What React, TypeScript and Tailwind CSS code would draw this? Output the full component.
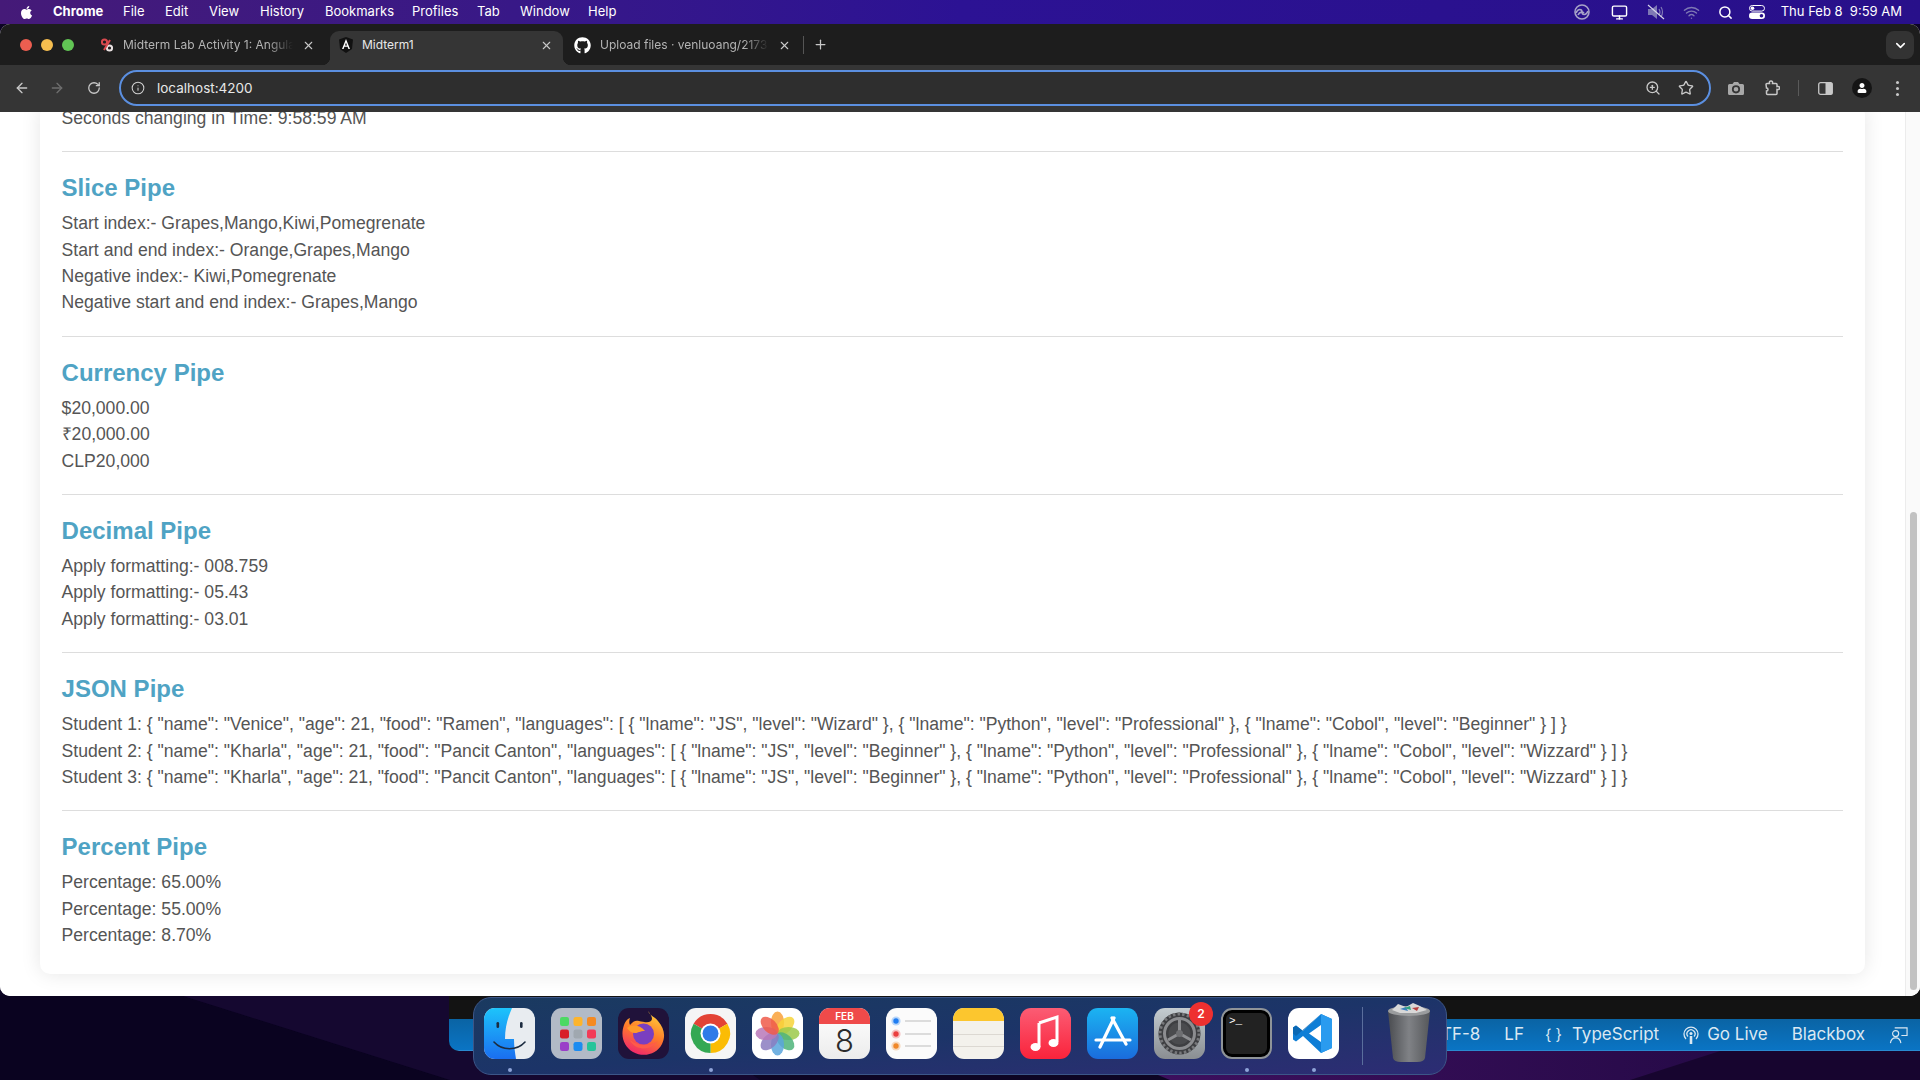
import React from "react";
import { ArrowLeft, ArrowRight, RotateCw, Info, ZoomIn, Star, ChevronDown, X, Plus, Search, Wifi, Monitor } from "lucide-react";
import { FaGithub, FaApple, FaUser } from "react-icons/fa";

const sections: { title: string; lines: string[] }[] = [
  { title: "Slice Pipe", lines: ["Start index:- Grapes,Mango,Kiwi,Pomegrenate", "Start and end index:- Orange,Grapes,Mango", "Negative index:- Kiwi,Pomegrenate", "Negative start and end index:- Grapes,Mango"] },
  { title: "Currency Pipe", lines: ["$20,000.00", "₹20,000.00", "CLP20,000"] },
  { title: "Decimal Pipe", lines: ["Apply formatting:- 008.759", "Apply formatting:- 05.43", "Apply formatting:- 03.01"] },
  { title: "JSON Pipe", lines: [
    'Student 1: { "name": "Venice", "age": 21, "food": "Ramen", "languages": [ { "lname": "JS", "level": "Wizard" }, { "lname": "Python", "level": "Professional" }, { "lname": "Cobol", "level": "Beginner" } ] }',
    'Student 2: { "name": "Kharla", "age": 21, "food": "Pancit Canton", "languages": [ { "lname": "JS", "level": "Beginner" }, { "lname": "Python", "level": "Professional" }, { "lname": "Cobol", "level": "Wizzard" } ] }',
    'Student 3: { "name": "Kharla", "age": 21, "food": "Pancit Canton", "languages": [ { "lname": "JS", "level": "Beginner" }, { "lname": "Python", "level": "Professional" }, { "lname": "Cobol", "level": "Wizzard" } ] }',
  ] },
  { title: "Percent Pipe", lines: ["Percentage: 65.00%", "Percentage: 55.00%", "Percentage: 8.70%"] },
];

function Tile({ children }: { children: React.ReactNode }) {
  return <svg viewBox="0 0 51 51" className="w-[51px] h-[51px] shrink-0">{children}</svg>;
}

const Finder = () => (
  <Tile>
    <defs><linearGradient id="fb" x1="0" y1="0" x2="0" y2="1"><stop offset="0" stopColor="#1dc4fb" /><stop offset="1" stopColor="#1a6ef0" /></linearGradient></defs>
    <rect width="51" height="51" rx="11" fill="#e8ecf0" />
    <path d="M11 0H28C24 9 21 19 21 31H30C30 38 31 45 32 51H11A11 11 0 0 1 0 40V11A11 11 0 0 1 11 0Z" fill="url(#fb)" />
    <rect x="12.5" y="14" width="2.6" height="6" rx="1.3" fill="#1c2c40" />
    <rect x="36" y="14" width="2.6" height="6" rx="1.3" fill="#1c2c40" />
    <path d="M10 34C18 43 33 43 41 34" fill="none" stroke="#1c2c40" strokeWidth="1.6" strokeLinecap="round" />
  </Tile>
);
const Launchpad = () => {
  const c = ["#4cd964", "#fdb42c", "#f58a22", "#d81e28", "#a0a8b0", "#f23b58", "#9a3fc8", "#1c8cf0", "#25c49a"];
  return (
    <Tile>
      <rect width="51" height="51" rx="11" fill="#b2bac6" />
      {c.map((f, i) => <rect key={i} x={9 + (i % 3) * 13.5} y={9 + Math.floor(i / 3) * 12.5} width="9" height="9" rx="2.2" fill={f} />)}
    </Tile>
  );
};
const Firefox = () => (
  <Tile>
    <defs>
      <linearGradient id="ff" x1="0.7" y1="0" x2="0.3" y2="1"><stop offset="0" stopColor="#ffcf3a" /><stop offset="0.5" stopColor="#ff7b2a" /><stop offset="1" stopColor="#f0256e" /></linearGradient>
    </defs>
    <rect width="51" height="51" rx="11" fill="#20123a" />
    <path d="M30 3C32 8 36 8 40 13C46 20 48 28 44 36C39 46 26 50 15 44C6 39 2 28 6 17C7 14 9 11 12 10C11 13 11 15 12 17C15 13 18 12 21 13C26 14 33 16 34 11C34 8 32 6 30 3Z" fill="url(#ff)" />
    <circle cx="25.5" cy="26" r="10.5" fill="#7a3fc0" />
    <path d="M9 20C14 16 22 17 27 23C22 23 20 25 17 25C14 25 11 23 9 20Z" fill="#ff9a2a" />
    <path d="M12 32C16 42 32 44 40 33C34 38 20 39 12 32Z" fill="#ff5a4a" />
  </Tile>
);
const Chrome = () => (
  <Tile>
    <rect width="51" height="51" rx="11" fill="#f5f5f5" />
    <path d="M25.5 25.5L8.6 15.75A19.5 19.5 0 0 1 42.4 15.75Z" fill="#e34335" />
    <path d="M25.5 25.5L42.4 15.75A19.5 19.5 0 0 1 25.5 45Z" fill="#fbbc05" />
    <path d="M25.5 25.5L25.5 45A19.5 19.5 0 0 1 8.6 15.75Z" fill="#34a853" />
    <circle cx="25.5" cy="25.5" r="10" fill="#fff" />
    <circle cx="25.5" cy="25.5" r="8" fill="#2f7be8" />
  </Tile>
);
const Photos = () => {
  const p = ["#f9a13a", "#f7d43a", "#9cc94a", "#4fb47a", "#5aa5dc", "#8a7cc0", "#b878b8", "#ee5a4a"];
  return (
    <Tile>
      <rect width="51" height="51" rx="11" fill="#fff" />
      {p.map((f, i) => <ellipse key={i} cx="25.5" cy="14.5" rx="6.6" ry="11" fill={f} opacity="0.85" transform={`rotate(${i * 45} 25.5 25.5)`} />)}
    </Tile>
  );
};
const Calendar = () => (
  <div className="relative w-[51px] h-[51px] shrink-0 rounded-[11px] bg-gradient-to-b from-white to-[#ececec] flex flex-col items-center">
    <div className="w-full h-[16px] rounded-t-[11px] bg-[#ef4a4a] text-white text-[10px] font-semibold leading-[17px] text-center font-['Inter',sans-serif]">FEB</div>
    <div className="text-[#2b2b2b] text-[31px] leading-[33px] font-['Inter',sans-serif] font-light">8</div>
  </div>
);
const Reminders = () => (
  <Tile>
    <rect width="51" height="51" rx="11" fill="#fbfbfb" />
    {[["#1f7df2", 13], ["#ea3f3f", 26], ["#f0882a", 38]].map(([f, y], i) => (
      <g key={i}>
        <circle cx="10" cy={y as number} r="4.6" fill={f as string} opacity="0.3" />
        <circle cx="10" cy={y as number} r="2.7" fill={f as string} />
        <rect x="19" y={(y as number) - 0.7} width="26" height="1.4" fill="#cfcfcf" />
      </g>
    ))}
  </Tile>
);
const Notes = () => (
  <Tile>
    <rect width="51" height="51" rx="11" fill="#f3f1ec" />
    <path d="M0 13V11A11 11 0 0 1 11 0H40A11 11 0 0 1 51 11V13Z" fill="#fcc62e" />
    <rect y="26" width="51" height="0.8" fill="#d6d3cc" />
    <rect y="38" width="51" height="0.8" fill="#d6d3cc" />
  </Tile>
);
const Music = () => (
  <Tile>
    <defs><linearGradient id="mg" x1="0" y1="0" x2="0" y2="1"><stop offset="0" stopColor="#fb5c74" /><stop offset="1" stopColor="#fa233b" /></linearGradient></defs>
    <rect width="51" height="51" rx="11" fill="url(#mg)" />
    <path d="M19 15L37 9V34" fill="none" stroke="#fff" strokeWidth="3" />
    <path d="M19 15V39" fill="none" stroke="#fff" strokeWidth="3" />
    <ellipse cx="15.5" cy="39" rx="5" ry="4" fill="#fff" />
    <ellipse cx="33.5" cy="35" rx="5" ry="4" fill="#fff" />
  </Tile>
);
const AppStore = () => (
  <Tile>
    <defs><linearGradient id="ag" x1="0" y1="0" x2="0" y2="1"><stop offset="0" stopColor="#1bb4f2" /><stop offset="1" stopColor="#1a6cdc" /></linearGradient></defs>
    <rect width="51" height="51" rx="11" fill="url(#ag)" />
    <g stroke="#fff" strokeWidth="3.2" strokeLinecap="round" fill="none">
      <path d="M27 10L13 39" />
      <path d="M25 10L39 36" />
      <path d="M9 32H43" />
    </g>
  </Tile>
);
const Settings = () => (
  <div className="relative w-[51px] h-[51px] shrink-0">
    <Tile>
      <defs><linearGradient id="sg" x1="0" y1="0" x2="0" y2="1"><stop offset="0" stopColor="#c4ccd0" /><stop offset="1" stopColor="#8a8e92" /></linearGradient></defs>
      <rect width="51" height="51" rx="11" fill="url(#sg)" />
      <circle cx="25.5" cy="25.5" r="21" fill="#3e3f42" />
      <circle cx="25.5" cy="25.5" r="19.5" fill="none" stroke="#77787b" strokeWidth="3" strokeDasharray="2.5 2.2" />
      <circle cx="25.5" cy="25.5" r="15" fill="none" stroke="#8c8d90" strokeWidth="3" />
      <circle cx="25.5" cy="25.5" r="11" fill="#4a4b4e" />
      <g stroke="#8e8f92" strokeWidth="3">
        <path d="M25.5 25.5V12" />
        <path d="M25.5 25.5L37 32" />
        <path d="M25.5 25.5L14 32" />
      </g>
      <circle cx="25.5" cy="25.5" r="3.5" fill="#6e6f72" />
    </Tile>
    <div className="absolute -top-[6px] -right-[8px] w-6 h-6 rounded-full bg-[#ee3030] text-white text-[12px] font-semibold flex items-center justify-center font-['Inter',sans-serif]">2</div>
  </div>
);
const Terminal = () => (
  <div className="w-[51px] h-[51px] shrink-0 rounded-[11px] bg-black border-2 border-[#8f9498] p-[3px]">
    <div className="w-full h-full rounded-[6px] bg-[#222] text-white text-[11px] leading-[12px] pl-[3px] pt-[2px] font-['Liberation_Mono',monospace]">&gt;_</div>
  </div>
);
const VSCode = () => (
  <Tile>
    <rect width="51" height="51" rx="11" fill="#fff" />
    <path d="M33 6L44 11V40L33 45L15 28L8 33.5L5 31.5V19.5L8 17.5L15 23ZM33 17L21 25.5L33 34Z" fill="#0e7ed6" fillRule="evenodd" />
    <path d="M33 6L8 28L5 25.5V19.5L8 17.5L15 23L33 6Z" fill="#0a68b4" />
    <path d="M33 6L44 11V40L33 45Z" fill="#2a9bef" fillRule="evenodd" />
  </Tile>
);
const Trash = () => (
  <svg viewBox="0 0 46 60" className="w-[46px] h-[60px] shrink-0">
    <defs><linearGradient id="tg" x1="0" y1="0" x2="1" y2="0"><stop offset="0" stopColor="#4a4c50" /><stop offset="0.5" stopColor="#808286" /><stop offset="1" stopColor="#55575a" /></linearGradient></defs>
    <path d="M2 8L7 55Q8 59 15 59H31Q38 59 39 55L44 8Z" fill="url(#tg)" />
    <ellipse cx="23" cy="8" rx="21" ry="5" fill="#9a9c9e" />
    <path d="M6 7L12 1L20 4L27 0L34 3L41 7L30 10H14Z" fill="#d8d8d8" />
    <path d="M14 6L20 4L22 8Z" fill="#3a7fc0" />
    <path d="M26 5L33 4L31 8Z" fill="#b84040" />
    <path d="M18 5L24 3L25 7Z" fill="#30a080" />
  </svg>
);

const Dot = () => <span className="absolute left-1/2 -translate-x-1/2 top-[60px] w-[4px] h-[4px] rounded-full bg-[#8fa4d8]" />;

function Favicon1() {
  return (
    <svg viewBox="0 0 14 14" className="w-[14px] h-[14px] shrink-0">
      <circle cx="4.5" cy="4" r="2.6" fill="none" stroke="#d8494e" strokeWidth="2" />
      <circle cx="9.5" cy="10" r="2.6" fill="none" stroke="#e8e0e0" strokeWidth="2" />
      <path d="M10 2L4 12" stroke="#d8494e" strokeWidth="2" />
    </svg>
  );
}
function AngularIcon() {
  return (
    <svg viewBox="0 0 14 16" className="w-[14px] h-[16px] shrink-0">
      <path d="M7 0L14 2.5L13 12L7 16L1 12L0 2.5Z" fill="#111" />
      <path d="M7 2L3 12H4.6L5.4 9.8H8.6L9.4 12H11ZM6 8.4L7 5.5L8 8.4Z" fill="#fff" fillRule="evenodd" />
    </svg>
  );
}

const Tab = ({ icon, title, active, w, fade }: { icon: React.ReactNode; title: string; active?: boolean; w: string; fade?: boolean }) => (
  <div className={`relative ${w} h-[34px] flex items-center pl-[9px] pr-[10px] pb-[6px] gap-[9px] rounded-t-[9px] ${active ? "bg-[#353535] text-[#e8e8e8]" : "text-[#b4b4b4]"}`}>
    {active && <span className="absolute -left-[8px] bottom-0 w-[8px] h-[8px] bg-[radial-gradient(circle_at_0_0,transparent_8px,#353535_8.5px)]" />}
    {active && <span className="absolute -right-[8px] bottom-0 w-[8px] h-[8px] bg-[radial-gradient(circle_at_100%_0,transparent_8px,#353535_8.5px)]" />}
    {icon}
    <span className={`flex-1 whitespace-nowrap overflow-hidden text-[12px] ${fade ? "[mask-image:linear-gradient(90deg,#000_85%,transparent)]" : ""}`}>{title}</span>
    <X size={13} strokeWidth={2} className="shrink-0 text-[#c8c8c8]" />
  </div>
);

export default function App() {
  return (
    <div className="relative w-[1920px] h-[1080px] overflow-hidden bg-[#0d0524] font-['Inter',sans-serif]">
      <svg viewBox="0 0 1920 1080" className="absolute inset-0 w-full h-full">
        <defs>
          <linearGradient id="wp" x1="0" y1="0" x2="1" y2="0"><stop offset="0" stopColor="#3f1060" /><stop offset="1" stopColor="#260a48" /></linearGradient>
        </defs>
        <rect width="1920" height="1080" fill="#0d0524" />
        <path d="M180 995L450 1080H0V995Z" fill="#0a0320" />
        <path d="M180 995L450 1080H760L640 995Z" fill="#150830" />
        <path d="M1400 1051H1920V1080H1400Z" fill="#17052f" />
        <path d="M1100 1051H1720L1630 1080H1170Z" fill="url(#wp)" />
      </svg>

      {/* VS Code window peeking out behind the browser */}
      <div className="absolute left-[449px] right-0 top-[985px] h-[66px] rounded-bl-[10px] overflow-hidden flex flex-col bg-[#111]">
        <div className="h-[34px] bg-[#131313]" />
        <div className="flex-1 pt-[1px] bg-gradient-to-b from-[#0a64a4] to-[#0a74c4] border-b border-[#2a8ad0] text-[#dbe8f2] text-[17px] flex items-center justify-end gap-[24px] pr-[12px]">
          <span>UTF-8</span>
          <span className="-mr-[3px]">LF</span>
          <span className="flex items-center gap-[10px]"><span className="text-[15px]">{"{ }"}</span>TypeScript</span>
          <span className="flex items-center gap-[8px]">
            <svg viewBox="0 0 16 18" className="w-[16px] h-[18px] fill-none stroke-[#dbe8f2] stroke-[1.3]">
              <path d="M3 13A7 7 0 1 1 13 13" />
              <path d="M5 10.5A4 4 0 1 1 11 10.5" />
              <circle cx="8" cy="7.5" r="1.5" fill="#dbe8f2" stroke="none" />
              <path d="M8 10V18" strokeWidth="2.6" />
            </svg>
            Go Live
          </span>
          <span>Blackbox</span>
          <svg viewBox="0 0 20 20" className="w-[19px] h-[19px] fill-none stroke-[#dbe8f2] stroke-[1.2]">
            <circle cx="7" cy="8" r="3.2" />
            <path d="M1.5 18C2 14 4 12.5 7 12.5S12 14 12.5 18" />
            <path d="M6 2H19V10H13" />
          </svg>
        </div>
      </div>

      {/* macOS menu bar */}
      <div className="relative h-[24px] flex items-center bg-gradient-to-r from-[#451a78] via-[#2c1294] to-[#28108a] text-white text-[13px]">
        <FaApple size={15} className="ml-[19px] text-white" />
        <span className="ml-[19px] font-bold w-[70px]">Chrome</span>
        <span className="w-[42px]">File</span>
        <span className="w-[44px]">Edit</span>
        <span className="w-[51px]">View</span>
        <span className="w-[65px]">History</span>
        <span className="w-[87px]">Bookmarks</span>
        <span className="w-[65px]">Profiles</span>
        <span className="w-[43px]">Tab</span>
        <span className="w-[68px]">Window</span>
        <span>Help</span>
        <div className="ml-auto flex items-center pr-[18px]">
          <svg viewBox="0 0 20 16" className="w-[20px] h-[16px] mr-[19px] fill-none stroke-[#a8a4c8] stroke-[1.6]">
            <circle cx="10" cy="8" r="7" />
            <path d="M4 9C6 4 10 5 10 8S14 12 16 7" />
            <path d="M6 11C8 7 11 8 12 9" />
          </svg>
          <Monitor size={17} className="mr-[19px] text-white" />
          <svg viewBox="0 0 18 16" className="w-[18px] h-[16px] mr-[18px]">
            <path d="M1 5H5L10 1V15L5 11H1Z" fill="#7e78b4" />
            <path d="M12 5Q14 8 12 11M14 3Q17 8 14 13" fill="none" stroke="#7e78b4" strokeWidth="1.2" />
            <path d="M1 1L17 15" stroke="#d8d6ea" strokeWidth="1.1" />
          </svg>
          <Wifi size={17} className="mr-[18px] text-[#7e78b4]" />
          <Search size={15} strokeWidth={2.4} className="mr-[16px] text-white" />
          <svg viewBox="0 0 16 14" className="w-[16px] h-[14px] mr-[16px]">
            <rect x="0.5" y="0.5" width="15" height="5.6" rx="2.8" fill="none" stroke="#fff" />
            <circle cx="3.5" cy="3.3" r="1.8" fill="#fff" />
            <rect x="0" y="7.6" width="16" height="6.4" rx="3.2" fill="#fff" />
            <circle cx="12.5" cy="10.8" r="1.8" fill="#28108a" />
          </svg>
          <span className="text-[13px] whitespace-pre">Thu Feb 8  9:59 AM</span>
        </div>
      </div>

      {/* Chrome window */}
      <div className="relative h-[972px] flex flex-col rounded-[10px] overflow-hidden bg-white">
        <div className="h-[41px] bg-[#1d1d1d] flex items-end shrink-0 relative">
          <div className="flex items-center gap-[8.8px] pl-[20px] w-[91px] h-[41px]">
            <span className="w-3 h-3 rounded-full bg-[#ed5e50]" />
            <span className="w-3 h-3 rounded-full bg-[#f5bd4f]" />
            <span className="w-3 h-3 rounded-full bg-[#61c554]" />
          </div>
          <Tab w="w-[234px] mr-[5px]" icon={<Favicon1 />} title="Midterm Lab Activity 1: Angular" fade />
          <Tab w="w-[233px] mr-[2px]" icon={<AngularIcon />} title="Midterm1" active />
          <Tab w="w-[236px]" icon={<FaGithub size={17} className="text-white shrink-0" />} title="Upload files · venluoang/2173" fade />
          <div className="w-px h-[18px] bg-[#555] mb-[11px] ml-[2px]" />
          <Plus size={15} className="ml-[9px] mb-[13px] text-[#c8c8c8]" />
          <div className="ml-auto mr-[6px] mb-[6px] w-[28px] h-[28px] rounded-[8px] bg-[#333] flex items-center justify-center">
            <ChevronDown size={15} strokeWidth={2.5} className="text-white" />
          </div>
        </div>

        <div className="h-[47px] shrink-0 bg-[#353535] flex items-center pb-[1px] text-[#c8c8c8]">
          <ArrowLeft size={16} strokeWidth={2} className="ml-[14px]" />
          <ArrowRight size={16} strokeWidth={2} className="ml-[19px] text-[#6e6e6e]" />
          <RotateCw size={14} strokeWidth={2.2} className="ml-[22px]" />
          <div className="ml-[18px] w-[1592px] h-[36px] rounded-full border-2 border-[#5b8fe0] bg-[#2e2e2e] flex items-center pl-[10px] pr-[15px]">
            <Info size={14} strokeWidth={1.8} className="text-[#d0d0d0]" />
            <span className="ml-[12px] text-[13.5px] text-[#e8e8e8]">localhost:4200</span>
            <ZoomIn size={16} className="ml-auto text-[#c8c8c8]" />
            <Star size={16} strokeWidth={2} className="ml-[17px] text-[#c8c8c8]" />
          </div>
          <svg viewBox="0 0 16 14" className="ml-[17px] w-[16px] h-[14px]">
            <path d="M1.5 3H4.5L6 1H10L11.5 3H14.5Q16 3 16 4.5V12.5Q16 14 14.5 14H1.5Q0 14 0 12.5V4.5Q0 3 1.5 3Z" fill="#a8a8a8" />
            <circle cx="8" cy="8.3" r="3.2" fill="none" stroke="#353535" strokeWidth="1.8" />
          </svg>
          <svg viewBox="0 0 16 16" className="ml-[20px] w-[16px] h-[16px] fill-none stroke-[#c8c8c8] stroke-[1.5]">
            <path d="M2 4.5Q2 3.5 3 3.5H5.5Q5 1 7 1T8.5 3.5H12Q13 3.5 13 4.5V6.5Q15.5 6 15.5 8T13 9.5V13.5Q13 14.5 12 14.5H3.5Q2.5 14.5 2.5 13.5V11Q4 11 4 9.5T2.5 8Z" />
          </svg>
          <div className="ml-[18px] w-px h-[16px] bg-[#5a5a5a]" />
          <svg viewBox="0 0 16 14" className="ml-[19px] w-[15px] h-[13px]">
            <rect x="0.7" y="0.7" width="14.6" height="12.6" rx="2" fill="none" stroke="#c8c8c8" strokeWidth="1.4" />
            <rect x="8" y="0.7" width="7.3" height="12.6" rx="1" fill="#c8c8c8" />
          </svg>
          <div className="ml-[19px] w-5 h-5 rounded-full bg-[#151515] flex items-center justify-center">
            <FaUser size={10} className="text-white" />
          </div>
          <div className="ml-[24px] flex flex-col gap-[3px]">
            <span className="w-[3px] h-[3px] rounded-full bg-[#c8c8c8]" />
            <span className="w-[3px] h-[3px] rounded-full bg-[#c8c8c8]" />
            <span className="w-[3px] h-[3px] rounded-full bg-[#c8c8c8]" />
          </div>
        </div>

        {/* Page viewport */}
        <div className="flex-1 flex min-h-0 overflow-hidden bg-white font-['Liberation_Sans',Arial,sans-serif]">
          <div className="flex-1 min-w-0 pl-[40px] pr-[40px]">
            <div className="-mt-[7.3px] h-[869px] rounded-[10px] bg-white shadow-[0_0_20px_rgba(0,0,0,0.1)] pl-[21.6px] pr-[22px] text-[17.6px] leading-[26.4px] text-[#555]">
              <p>Seconds changing in Time: 9:58:59 AM</p>
              {sections.map((s) => (
                <div key={s.title} className="mt-[20px] border-t border-[#ddd]">
                  <h2 className="mt-[22px] mb-[8px] text-[24px] leading-[28px] font-bold text-[#4fa3c4]">{s.title}</h2>
                  {s.lines.map((l) => <p key={l} className="whitespace-nowrap">{l}</p>)}
                </div>
              ))}
            </div>
          </div>
          <div className="w-[15px] shrink-0 bg-[#fafafa] border-l border-[#ececec] flex justify-center">
            <div className="mt-[400px] w-[7px] h-[478px] rounded-full bg-[#c2c2c2]" />
          </div>
        </div>
      </div>

      {/* Dock */}
      <div className="absolute left-[473px] top-[997px] w-[974px] h-[78px] rounded-[18px] border border-[#3c5688] bg-gradient-to-br from-[#1a3a60] via-[#1c3468] to-[#2d2c74] flex items-start pl-[10px] pt-[10px]">
        <div className="flex items-center gap-[16px]">
          <div className="relative"><Finder /><Dot /></div>
          <Launchpad />
          <Firefox />
          <div className="relative"><Chrome /><Dot /></div>
          <Photos />
          <Calendar />
          <Reminders />
          <Notes />
          <Music />
          <AppStore />
          <Settings />
          <div className="relative"><Terminal /><Dot /></div>
          <div className="relative"><VSCode /><Dot /></div>
        </div>
        <div className="ml-[23px] -mt-[1px] w-px h-[58px] bg-[#5a6e9c]" />
        <div className="ml-[23px] -mt-[5px]"><Trash /></div>
      </div>
    </div>
  );
}
